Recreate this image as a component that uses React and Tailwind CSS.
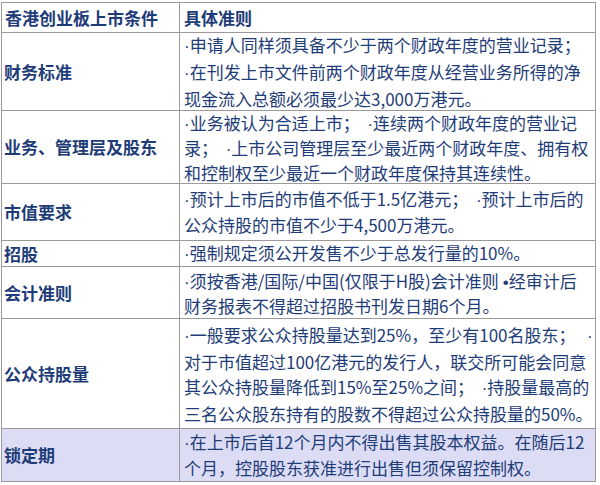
import React from "react";

const rows = [
  {
    label: "财务标准",
    h: "h-[78px]",
    lead: "leading-[25px]",
    lines: [
      "·申请人同样须具备不少于两个财政年度的营业记录；",
      "·在刊发上市文件前两个财政年度从经营业务所得的净",
      "现金流入总额必须最少达3,000万港元。",
    ],
  },
  {
    label: "业务、管理层及股东",
    h: "h-[73px]",
    lead: "leading-[23px]",
    lines: [
      "·业务被认为合适上市；  ·连续两个财政年度的营业记",
      "录；  ·上市公司管理层至少最近两个财政年度、拥有权",
      "和控制权至少最近一个财政年度保持其连续性。",
    ],
  },
  {
    label: "市值要求",
    h: "h-[57px]",
    lead: "leading-[24px]",
    lines: [
      "·预计上市后的市值不低于1.5亿港元；  ·预计上市后的",
      "公众持股的市值不少于4,500万港元。",
    ],
  },
  {
    label: "招股",
    h: "h-[26px]",
    lead: "leading-[24px]",
    lines: ["·强制规定须公开发售不少于总发行量的10%。"],
  },
  {
    label: "会计准则",
    h: "h-[52px]",
    lead: "leading-[23px]",
    lines: [
      "·须按香港/国际/中国(仅限于H股)会计准则 •经审计后",
      "财务报表不得超过招股书刊发日期6个月。",
    ],
  },
  {
    label: "公众持股量",
    h: "h-[110px]",
    lead: "leading-[25px]",
    lines: [
      "·一般要求公众持股量达到25%，至少有100名股东；   ·",
      "对于市值超过100亿港元的发行人，联交所可能会同意",
      "其公众持股量降低到15%至25%之间；  ·持股量最高的",
      "三名公众股东持有的股数不得超过公众持股量的50%。",
    ],
  },
  {
    label: "锁定期",
    h: "h-[52px]",
    lead: "leading-[24px]",
    bg: "bg-[#dcdcf5]",
    last: true,
    lines: [
      "·在上市后首12个月内不得出售其股本权益。在随后12",
      "个月，控股股东获准进行出售但须保留控制权。",
    ],
  },
];

// the CJK font draws "·" full width; the original uses a narrow dot
const renderLine = (line) =>
  line.split(/([·•])/).map((part, i) =>
    part === "·" || part === "•" ? (
      <span key={i} className="font-['Liberation_Sans']">
        {part}
      </span>
    ) : (
      part
    )
  );

const App = () => {
  return (
    <div
      className="w-[600px] h-[485px] bg-white pt-[2px] pl-[1px] overflow-hidden text-[#1e3c78] text-[17px]"
      style={{ fontFamily: '"Noto Sans CJK SC", "Noto Sans", sans-serif' }}
    >
      <div className="w-[595px] border border-[#9a9a9a] flex flex-col">
        {/* header */}
        <div className="flex h-[30px] border-b border-[#9a9a9a]">
          <div className="w-[178px] shrink-0 border-r border-[#9a9a9a] flex items-center pl-[3px] font-bold">
            香港创业板上市条件
          </div>
          <div className="flex-1 flex items-center pl-[4px] font-bold">具体准则</div>
        </div>

        {rows.map((row) => (
          <div
            key={row.label}
            className={`flex ${row.h} ${row.bg || "bg-white"} ${row.last ? "" : "border-b border-[#9a9a9a]"}`}
          >
            <div className="w-[178px] shrink-0 border-r border-[#9a9a9a] flex items-center pl-[2px] font-semibold">
              {row.label}
            </div>
            <div className={`flex-1 flex flex-col justify-center pl-[4px] ${row.lead}`}>
              {row.lines.map((line, i) => (
                <span key={i} className="whitespace-pre">
                  {renderLine(line)}
                </span>
              ))}
            </div>
          </div>
        ))}
      </div>
    </div>
  );
};

export default App;
